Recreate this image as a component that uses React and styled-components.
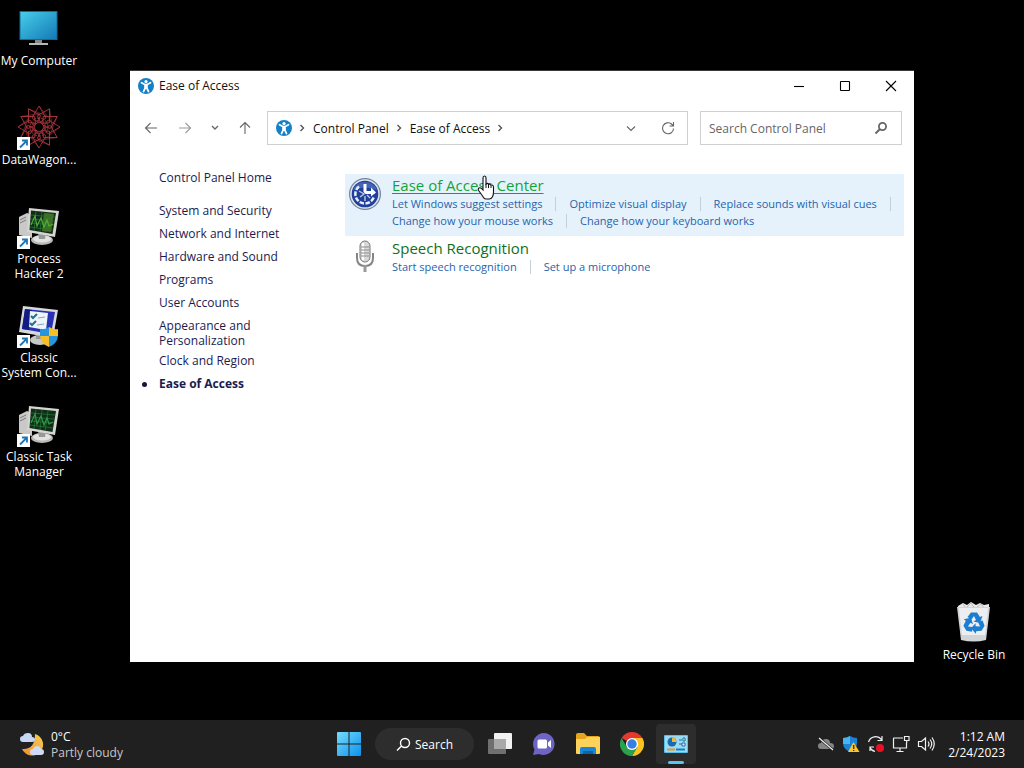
import React, { useState } from "react";
import styled, { createGlobalStyle } from "styled-components";

const GlobalStyle = createGlobalStyle`
  * {
    box-sizing: border-box;
  }
  body {
    margin: 0;
    background: #000;
    font-family: "Open Sans", "Noto Sans", sans-serif;
    font-size: 12px;
    line-height: 15px;
  }
  button, input {
    font: inherit;
    color: inherit;
    background: none;
    border: 0;
    padding: 0;
  }
  ul {
    list-style: none;
    margin: 0;
    padding: 0;
  }
  svg {
    display: block;
    flex: none;
  }
`;

const Screen = styled.div`
  min-height: 100vh;
  display: flex;
  flex-direction: column;
`;

const Desktop = styled.main`
  position: relative;
  flex: 1;
  display: flex;
  justify-content: space-between;
`;

const IconColumn = styled.div`
  display: flex;
  flex-direction: column;
  justify-content: ${(props) => (props.$bottom ? "flex-end" : "flex-start")};
  padding: ${(props) => (props.$bottom ? "0 11px 27px 0" : "0")};
`;

const Shortcut = styled.button`
  width: 78px;
  height: 99px;
  padding-top: 4px;
  display: flex;
  flex-direction: column;
  align-items: center;
  gap: 1px;
  color: #fff;
`;

const AppWindow = styled.section`
  position: absolute;
  top: 70px;
  right: 110px;
  bottom: 58px;
  left: 130px;
  display: flex;
  flex-direction: column;
  background: #fff;
  border-top: 1px solid #3a3a3a;
  color: #111;
`;

const TitleBar = styled.header`
  display: flex;
  align-items: center;
  justify-content: space-between;
  height: 29px;
  padding-left: 8px;
`;

const Title = styled.h1`
  display: flex;
  align-items: center;
  gap: 5px;
  margin: 0;
  font-size: 12px;
  font-weight: 400;
`;

const WindowButtons = styled.div`
  display: flex;
`;

const WindowButton = styled.button`
  width: 46px;
  height: 29px;
  display: grid;
  place-items: center;
`;

const Toolbar = styled.div`
  display: flex;
  align-items: center;
  padding: 11px 12px 0 4px;
`;

const NavButtons = styled.div`
  display: flex;
  width: 133px;
`;

const NavButton = styled.button`
  width: ${(props) => (props.$narrow ? "26px" : "34px")};
  height: 34px;
  display: grid;
  place-items: center;
`;

const AddressBar = styled.nav`
  flex: 1;
  height: 34px;
  display: flex;
  align-items: center;
  border: 1px solid #d0d0d0;
  padding: 0 11px 0 8px;
`;

const Crumb = styled.button`
  white-space: nowrap;
`;

const CrumbArrow = styled.svg`
  margin: 0 8px 0 7px;
`;

const AddressTools = styled.div`
  display: flex;
  gap: 21px;
  margin-left: auto;
`;

const SearchBox = styled.label`
  width: 202px;
  height: 34px;
  display: flex;
  align-items: center;
  margin-left: 12px;
  border: 1px solid #d0d0d0;
  padding: 0 13px 0 8px;
`;

const SearchInput = styled.input`
  flex: 1;
  min-width: 0;
  outline: 0;
  &::placeholder {
    color: #666;
    opacity: 1;
  }
`;

const Body = styled.div`
  flex: 1;
  display: grid;
  grid-template-columns: 215px 1fr;
  padding: 25px 10px 0 0;
`;

const Sidebar = styled.nav`
  padding-left: 29px;
`;

const SideItem = styled.li`
  position: relative;
  width: 140px;
  margin-bottom: ${(props) => props.$gap || 8}px;
  font-weight: ${(props) => (props.$current ? 700 : 400)};
`;

const SideLink = styled.a`
  color: #1b1b4f;
  text-decoration: none;
`;

const Bullet = styled.span`
  position: absolute;
  left: -17px;
  top: 6px;
  width: 5px;
  height: 5px;
  border-radius: 50%;
  background: #16163a;
`;

const Categories = styled.div`
  padding-top: 4px;
`;

const Category = styled.article`
  position: relative;
  display: flex;
  gap: 11px;
  padding: 1px 0 7px 4px;
  margin-bottom: 1px;
  background: ${(props) => (props.$hover ? "#e5f2fc" : "transparent")};
`;

const CategoryTitle = styled.h2`
  margin: 0;
  font-size: 15px;
  line-height: 20px;
  font-weight: 400;
`;

const CategoryLink = styled.a`
  color: ${(props) => (props.$hover ? "#15a238" : "#10701c")};
  text-decoration: ${(props) => (props.$hover ? "underline" : "none")};
  text-underline-offset: 2px;
`;

const TaskRow = styled.ul`
  display: flex;
`;

const Task = styled.li`
  display: flex;
  align-items: center;
  font-size: 11px;
  line-height: 17px;
  white-space: nowrap;
  &::after {
    content: "";
    display: ${(props) => (props.$last ? "none" : "block")};
    width: 1px;
    height: 14px;
    margin: 0 13px;
    background: #c3d0dc;
  }
`;

const TaskLink = styled.a`
  color: #1f64ad;
  text-decoration: none;
`;

const Cursor = styled.svg`
  position: absolute;
  left: 132px;
  top: 1px;
`;

const Taskbar = styled.footer`
  height: 48px;
  display: grid;
  grid-template-columns: 1fr auto 1fr;
  align-items: center;
  background: #202020;
  color: #fff;
`;

const Weather = styled.button`
  display: flex;
  align-items: center;
  gap: 6px;
  padding: 2px 0 0 19px;
  text-align: left;
  line-height: 16px;
`;

const Muted = styled.div`
  color: #c8c8c8;
`;

const Apps = styled.div`
  display: flex;
  align-items: center;
`;

const AppButton = styled.button`
  position: relative;
  width: 44px;
  height: 48px;
  display: grid;
  place-items: center;
`;

const ActiveApp = styled(AppButton)`
  width: 40px;
  height: 40px;
  margin: 0 2px;
  border-radius: 4px;
  background: #2d2d2d;
  &::after {
    content: "";
    position: absolute;
    left: 12px;
    bottom: 0;
    width: 16px;
    height: 3px;
    border-radius: 2px;
    background: #5cc3ee;
  }
`;

const SearchPill = styled.button`
  width: 99px;
  height: 32px;
  margin: 0 4px;
  display: flex;
  align-items: center;
  justify-content: center;
  gap: 4px;
  border-radius: 16px;
  background: #2d2d2d;
`;

const Tray = styled.div`
  display: flex;
  align-items: center;
  justify-content: flex-end;
  padding-right: 19px;
`;

const TrayButton = styled.button`
  width: 25px;
  height: 40px;
  display: grid;
  place-items: center;
`;

const Clock = styled.time`
  width: 67px;
  display: flex;
  flex-direction: column;
  align-items: flex-end;
  padding-top: 1px;
  line-height: 16px;
`;

const ShortcutArrow = () => (
  <g>
    <rect x="2" y="34" width="13" height="13" fill="#fff" />
    <path
      d="M5 44.5 L11.5 38 M7 37.5 H12 V42.5"
      fill="none"
      stroke="#1976b8"
      strokeWidth="1.8"
    />
  </g>
);

const ComputerIcon = () => (
  <svg width="48" height="48" viewBox="0 0 48 48">
    <defs>
      <linearGradient id="screen" x1="0" y1="0" x2="1" y2="1">
        <stop offset="0" stopColor="#46cdea" />
        <stop offset="1" stopColor="#147ab5" />
      </linearGradient>
    </defs>
    <rect x="4.5" y="7" width="38" height="29" fill="#16689a" />
    <rect x="5.5" y="8" width="36" height="27" fill="url(#screen)" />
    <path d="M20 36h7v3.500h-7z" fill="#85898c" />
    <path d="M14 39h19v2H14z" fill="#b4b8ba" />
  </svg>
);

const petals = Array.from({ length: 12 }, (_, i) => i * 30);

const WagonIcon = () => (
  <svg width="48" height="48" viewBox="0 0 48 48">
    <g fill="none" stroke="#b23a41" strokeWidth="0.8">
      {petals.map((angle) => (
        <g key={angle} transform={`rotate(${angle} 24 24)`}>
          <path d="M24 3 L31 15 L24 20 L17 15 Z" />
          <path d="M24 3 L36 18" opacity="0.6" />
        </g>
      ))}
      <circle cx="24" cy="24" r="9" strokeDasharray="3 1" />
      <circle cx="24" cy="24" r="6" stroke="#7c252c" strokeWidth="2.5" strokeDasharray="3 2" />
    </g>
    <ShortcutArrow />
  </svg>
);

const MonitorBase = ({ children }) => (
  <svg width="48" height="48" viewBox="0 0 48 48">
    {children}
    <ShortcutArrow />
  </svg>
);

const GraphIcon = ({ bright }) => (
  <MonitorBase>
    <path d="M4 15 L12 11 L17 13 V36 L4 33Z" fill="#c9c9c7" />
    <path d="M5 18l6-3M5 21l6-3" stroke="#777" strokeWidth="1" />
    <ellipse cx="27" cy="38" rx="11" ry="5" fill="#b9bab8" />
    <ellipse cx="27" cy="37" rx="9" ry="3.5" fill="#e2e2e0" />
    <path d="M23 31h8l-1 6h-6z" fill="#96999a" />
    <path d="M14 6 L44 9 L40 35 L12 30Z" fill="#d5d5d2" />
    <path d="M16 8.500 L41 11 L37.500 32 L14.500 28Z" fill="#102d18" />
    {bright && <path d="M29 11 L39 12 L36 30 L27 29Z" fill="#6b9a24" opacity="0.6" />}
    <path
      d="M16 13l24 2M16 17l23 2M15 21l24 2M15 25l23 3M21 9l-2 20M27 10l-2 20M33 11l-3 20"
      stroke="#237438"
      strokeWidth="0.8"
    />
    <path
      d="M16 23l4-9 2 10 4-8 3 9 3-7 2 6 4-2"
      fill="none"
      stroke={bright ? "#4fae35" : "#2f9a43"}
      strokeWidth="1.2"
    />
  </MonitorBase>
);

const ConfigIcon = () => (
  <MonitorBase>
    <ellipse cx="25" cy="39" rx="10" ry="5" fill="#c6c7c6" />
    <path d="M21 31h9v7h-9z" fill="#96999a" />
    <path d="M8 5 L43 9 L38 37 L4 31Z" fill="#d7d8da" />
    <path d="M10 8 L40 11 L36 33 L7 28Z" fill="#2831b4" />
    <path d="M10 8 L17 9 L14 29 L7 28Z" fill="#101c83" />
    <path d="M15 10 L33 12 L31 29 L14 26Z" fill="#eef5fa" />
    <path d="M16 15l2 2 4-4M15 22l2 2 4-4" fill="none" stroke="#27708a" strokeWidth="2" />
    <path d="M23 17l7-1M22 24l7-1" stroke="#8fa5b8" strokeWidth="1.2" />
    <path d="M34 26q-5 3-9 2v7h9z" fill="#2695dd" />
    <path d="M34 26q5 3 9 2v7h-9z" fill="#f6bf26" />
    <path d="M25 35h9v11q-8-3-9-11z" fill="#f6bf26" />
    <path d="M34 35h9q-1 8-9 11z" fill="#2695dd" />
  </MonitorBase>
);

const RecycleIcon = () => (
  <svg width="48" height="48" viewBox="0 0 48 48">
    <path d="M8 8l5-3 4 2 4-3 5 3 4-2 4 2 5-1v6H8z" fill="#e9eaeb" />
    <path d="M13 6l3 4 5-5 4 6 6-5 4 5" fill="none" stroke="#b4b7ba" />
    <path d="M7 9h33l-4 33q-12 3-25 0z" fill="#d2d5d8" />
    <path d="M9 10h29l-3 27H12z" fill="#eceeef" />
    {[0, 120, 240].map((angle) => (
      <g key={angle} transform={`rotate(${angle} 24 25)`}>
        <path d="M17.500 19l3.500-4.500h6l3 4.500 2.500-1-2.500 7-6.500-1.500 2.500-1.500-2-4-2.500 3.500z" fill="#1c7ed2" />
      </g>
    ))}
  </svg>
);

const AccessIcon = () => (
  <svg width="16" height="16" viewBox="0 0 16 16">
    <circle cx="8" cy="8" r="8" fill="#1480c8" />
    <circle cx="8" cy="3.6" r="1.6" fill="#fff" />
    <path
      d="M3.500 4.700L6.700 6.500h2.600l3.200-1.800M8 6.500v3.500M7 7v3.500L5.500 13.500M9 7v3.500l1.500 3"
      fill="none"
      stroke="#fff"
      strokeWidth="1.7"
      strokeLinecap="round"
    />
  </svg>
);

const EaseCenterIcon = () => (
  <svg width="32" height="36" viewBox="0 0 32 36">
    <circle cx="16" cy="19" r="16" fill="#71839d" />
    <circle cx="16" cy="19" r="14.8" fill="#dfe5ee" />
    <circle cx="16" cy="19" r="13.3" fill="#1f3f9a" />
    <path d="M4 15a13 13 0 0 1 24 0q-12-5-24 0z" fill="#4565b4" />
    <path
      d="M10 11.500a9.500 9.500 0 1 0 15 10"
      fill="none"
      stroke="#e8eefa"
      strokeWidth="2.5"
      strokeDasharray="4.500 1.500"
    />
    <path d="M14.500 9h3v7h8v3h-9l-2-2z" fill="#fff" />
    <path d="M22 12.500l5 5-5 4z" fill="#fff" />
    <path d="M10 16l5 3-4 3M16 21v5M18 20l3 3" fill="none" stroke="#b8c9ea" strokeWidth="1.4" />
  </svg>
);

const MicrophoneIcon = () => (
  <svg width="32" height="36" viewBox="0 0 32 36">
    <path d="M8 15v5q0 8 8 8t8-8v-5" fill="none" stroke="#858585" strokeWidth="2" />
    <path d="M14.500 27h3v7h-3z" fill="#999" />
    <rect x="11" y="3" width="10" height="21" rx="5" fill="#d8d8d8" stroke="#777" />
    <path d="M14 5v17" stroke="#fff" strokeWidth="2" />
    <path d="M12 9h8M12 12h8M12 15h8M12 18h8" stroke="#8b8b8b" strokeWidth="1" />
  </svg>
);

const Line = ({ d, width = 16, height = 16, color = "#666", weight = 1.1 }) => (
  <svg
    width={width}
    height={height}
    viewBox={`0 0 ${width} ${height}`}
    fill="none"
    stroke={color}
    strokeWidth={weight}
  >
    <path d={d} />
  </svg>
);

const Chevron = () => (
  <CrumbArrow width="6" height="8" viewBox="0 0 6 8" fill="none" stroke="#555">
    <path d="M1.500 1l3 3-3 3" strokeWidth="1.4" />
  </CrumbArrow>
);

const MagnifierIcon = () => (
  <svg width="14" height="14" viewBox="0 0 14 14" fill="none" stroke="#666">
    <circle cx="8.5" cy="5.5" r="3.6" strokeWidth="1.8" />
    <path d="M6 8L1.500 12.500" strokeWidth="2" />
  </svg>
);

const HandCursor = () => (
  <Cursor width="18" height="25" viewBox="0 0 18 25" aria-hidden="true">
    <path
      d="M6 14V3q0-2 1.500-2T9 3v6q1.500-1.500 2.500.5 1.500-1 2.500.7 2.500-.7 2.500 2V17q0 6-4 7H9q-2 0-3.500-3L2 16q-1.500-2 0-3t4 2z"
      fill="#fff"
      stroke="#111"
      strokeWidth="1.1"
    />
    <path d="M9 9v4M11.500 10v3M14 10.500V13" stroke="#111" />
  </Cursor>
);

const WeatherIcon = () => (
  <svg width="26" height="26" viewBox="0 0 26 26">
    <defs>
      <linearGradient id="moon" x1="1" y1="0" x2="0" y2="1">
        <stop offset="0" stopColor="#f6cf52" />
        <stop offset="1" stopColor="#ee8e2c" />
      </linearGradient>
    </defs>
    <path d="M16 2a11 11 0 1 1-13 15q13 1 13-15z" fill="url(#moon)" />
    <path d="M4 10a3 3 0 0 1 0-6q1-3 5-3t4 4q3 0 3 2.500T13 10z" fill="#c7d8f7" />
    <path d="M14 23a3 3 0 0 1 0-6q1-3 4-3t4 3q3 0 3 3t-3 3z" fill="#d0d9f5" />
  </svg>
);

const StartIcon = () => (
  <svg width="24" height="24" viewBox="0 0 24 24">
    <defs>
      <linearGradient id="start" x1="0" y1="0" x2="1" y2="1">
        <stop offset="0" stopColor="#75ddfa" />
        <stop offset="1" stopColor="#0b91ee" />
      </linearGradient>
    </defs>
    <path
      d="M1 0h10.500v11.500H0V1q0-1 1-1zM12.500 0H23q1 0 1 1v10.500H12.500zM0 12.500h11.500V24H1q-1 0-1-1zM12.500 12.500H24V23q0 1-1 1H12.500z"
      fill="url(#start)"
    />
  </svg>
);

const TaskViewIcon = () => (
  <svg width="24" height="24" viewBox="0 0 24 24">
    <rect x="6" y="1" width="18" height="16" rx="1" fill="#f1f1f1" />
    <rect x="0" y="7" width="18" height="15" rx="1" fill="#6f6f6f" />
    <path d="M6 7h12v10H6z" fill="#a9a9a9" />
  </svg>
);

const ChatIcon = () => (
  <svg width="24" height="24" viewBox="0 0 24 24">
    <path d="M12 1a11 11 0 1 1-5 21l-6 1 1.500-5.500A11 11 0 0 1 12 1z" fill="#6e64c4" />
    <rect x="5.5" y="7.5" width="9.5" height="9" rx="1.5" fill="#fff" />
    <path d="M16 10.500l3-2.500v8l-3-2.500z" fill="#fff" />
  </svg>
);

const FolderIcon = () => (
  <svg width="24" height="24" viewBox="0 0 24 24">
    <path d="M0 3q0-2 2-2h6l3 3h11q2 0 2 2v6H0z" fill="#e6a51d" />
    <path d="M0 7h9l2-2h13v16q0 1-1 1H1q-1 0-1-1z" fill="#fdd25b" />
    <path d="M4 22v-5q0-2 2-2h12q2 0 2 2v5z" fill="#1687d2" />
    <path d="M7 19h10v3H7z" fill="#0b65aa" />
  </svg>
);

const ChromeIcon = () => (
  <svg width="24" height="24" viewBox="0 0 24 24">
    <path d="M12 12L1.600 6a12 12 0 0 1 20.800 0z" fill="#e5392d" />
    <path d="M12 6h10.400A12 12 0 0 1 12 24l5.200-9z" fill="#fbc321" />
    <path d="M1.600 6L6.800 15l10.400 0L12 24A12 12 0 0 1 1.600 6z" fill="#2aa14c" />
    <circle cx="12" cy="12" r="6" fill="#fff" />
    <circle cx="12" cy="12" r="4.7" fill="#367fe5" />
  </svg>
);

const ControlPanelIcon = () => (
  <svg width="24" height="18" viewBox="0 0 24 18">
    <rect width="24" height="18" rx="1" fill="#5dbde9" />
    <rect x="1" y="1" width="22" height="16" fill="#9bdcf5" />
    <circle cx="8" cy="7" r="4.5" fill="#176caf" />
    <path d="M8 7V2.500A4.500 4.500 0 0 1 12.500 7z" fill="#f2b83c" />
    <path d="M15 5h3M15 9h3M19 3h2v3h-2zM18 8h3v3h-3z" stroke="#246c9f" fill="#e8f7fd" />
    <path d="M3 14.500h8" stroke="#e7962f" strokeWidth="2" />
    <path d="M12 14.500h9" stroke="#177fbe" strokeWidth="2" />
  </svg>
);

const CloudOffIcon = () => (
  <svg width="18" height="18" viewBox="0 0 18 18">
    <path d="M4 14a3 3 0 0 1 0-6q1-4 5-4t4 4q4 0 4 3t-3 3z" fill="#858585" />
    <path d="M2 3l14 12" stroke="#202020" strokeWidth="2.4" />
    <path d="M2 3l14 12" stroke="#f1f1f1" strokeWidth="1.2" />
  </svg>
);

const ShieldIcon = () => (
  <svg width="18" height="18" viewBox="0 0 18 18">
    <path d="M8 1q3 2 7 2v5q0 6-7 9-7-3-7-9V3q4 0 7-2z" fill="#1c82d6" />
    <path d="M8 1v8H1V3q4 0 7-2z" fill="#48b4ee" />
    <path d="M11.500 7L17.500 17H6z" fill="#fbc42b" />
    <path d="M11.700 10v4M11.700 15v1" stroke="#332a12" strokeWidth="1.3" />
  </svg>
);

const UpdateIcon = () => (
  <svg width="18" height="18" viewBox="0 0 18 18" fill="none" stroke="#f1f1f1" strokeWidth="1.2">
    <path d="M1.500 7a7.500 7.500 0 0 1 13-2.500M15 1v4.500h-4.500M3 16v-4h4M3 12.500q1 3 5 4" />
    <circle cx="13" cy="13" r="4" fill="#e81224" stroke="none" />
  </svg>
);

const NetworkIcon = () => (
  <svg width="18" height="18" viewBox="0 0 18 18" fill="none" stroke="#f1f1f1" strokeWidth="1.2">
    <path d="M11 3H2q-.5 0-.5.500v9.500h13V8M8 13v3M4.500 16.500h7M12.500 1.500H17v4h-4.500zM14.700 5.500V8" />
  </svg>
);

const VolumeIcon = () => (
  <svg width="18" height="18" viewBox="0 0 18 18" fill="none" stroke="#f1f1f1" strokeWidth="1.2">
    <path d="M1.500 6.500h3l4-3.500v12l-4-3.500h-3zM11 6.500q2 2.500 0 5M13 4.500q3.500 4.500 0 9M15 2.500q4.500 6.500 0 13" />
  </svg>
);

const shortcuts = [
  { label: "My Computer", icon: <ComputerIcon /> },
  { label: "DataWagon...", icon: <WagonIcon /> },
  { label: "Process Hacker 2", icon: <GraphIcon bright /> },
  { label: "Classic System Con...", icon: <ConfigIcon /> },
  { label: "Classic Task Manager", icon: <GraphIcon /> },
];

const sideItems = [
  { label: "Control Panel Home", gap: 18 },
  { label: "System and Security" },
  { label: "Network and Internet" },
  { label: "Hardware and Sound" },
  { label: "Programs" },
  { label: "User Accounts" },
  { label: "Appearance and Personalization", gap: 5 },
  { label: "Clock and Region" },
  { label: "Ease of Access", current: true },
];

const categories = [
  {
    title: "Ease of Access Center",
    icon: <EaseCenterIcon />,
    hover: true,
    rows: [
      [
        "Let Windows suggest settings",
        "Optimize visual display",
        "Replace sounds with visual cues",
      ],
      ["Change how your mouse works", "Change how your keyboard works"],
    ],
  },
  {
    title: "Speech Recognition",
    icon: <MicrophoneIcon />,
    rows: [["Start speech recognition", "Set up a microphone"]],
  },
];

const ControlPanel = () => {
  const [query, setQuery] = useState("");

  return (
    <AppWindow>
      <TitleBar>
        <Title>
          <AccessIcon />
          Ease of Access
        </Title>
        <WindowButtons>
          <WindowButton aria-label="Minimize">
            <Line d="M3 8.500h10" color="#000" />
          </WindowButton>
          <WindowButton aria-label="Maximize">
            <Line d="M4 3.500h8q.5 0 .5.500v8q0 .5-.5.500H4q-.5 0-.5-.5V4q0-.5.5-.5z" color="#000" />
          </WindowButton>
          <WindowButton aria-label="Close">
            <Line d="M3 3l10 10M13 3L3 13" color="#000" />
          </WindowButton>
        </WindowButtons>
      </TitleBar>

      <Toolbar>
        <NavButtons>
          <NavButton aria-label="Back">
            <Line d="M14 8H2.500M7.500 3l-5 5 5 5" />
          </NavButton>
          <NavButton aria-label="Forward">
            <Line d="M2 8h11.500M8.500 3l5 5-5 5" color="#999" />
          </NavButton>
          <NavButton $narrow aria-label="Recent locations">
            <Line d="M1 2l3 3 3-3" width={8} height={8} weight={1.4} />
          </NavButton>
          <NavButton aria-label="Up">
            <Line d="M8 14V2.500M3 7.500l5-5 5 5" />
          </NavButton>
        </NavButtons>
        <AddressBar aria-label="Address">
          <AccessIcon />
          <Chevron />
          <Crumb>Control Panel</Crumb>
          <Chevron />
          <Crumb>Ease of Access</Crumb>
          <Chevron />
          <AddressTools>
            <button aria-label="Previous locations">
              <Line d="M4 6.500l4 4 4-4" />
            </button>
            <button aria-label="Refresh">
              <Line d="M13.500 8.500a5.500 5.500 0 1 1-2-4.500l1.500 1.500M13.500 2v4h-4" />
            </button>
          </AddressTools>
        </AddressBar>
        <SearchBox>
          <SearchInput
            type="text"
            aria-label="Search Control Panel"
            placeholder="Search Control Panel"
            value={query}
            onChange={(e) => setQuery(e.target.value)}
          />
          <MagnifierIcon />
        </SearchBox>
      </Toolbar>

      <Body>
        <Sidebar>
          <ul>
            {sideItems.map((item) => (
              <SideItem key={item.label} $gap={item.gap} $current={item.current}>
                {item.current && <Bullet />}
                <SideLink href="#">{item.label}</SideLink>
              </SideItem>
            ))}
          </ul>
        </Sidebar>
        <Categories>
          {categories.map((category) => (
            <Category key={category.title} $hover={category.hover}>
              {category.icon}
              <div>
                <CategoryTitle>
                  <CategoryLink href="#" $hover={category.hover}>
                    {category.title}
                  </CategoryLink>
                </CategoryTitle>
                {category.rows.map((row, r) => (
                  <TaskRow key={r}>
                    {row.map((task, i) => (
                      <Task
                        key={task}
                        $last={r === category.rows.length - 1 && i === row.length - 1}
                      >
                        <TaskLink href="#">{task}</TaskLink>
                      </Task>
                    ))}
                  </TaskRow>
                ))}
              </div>
              {category.hover && <HandCursor />}
            </Category>
          ))}
        </Categories>
      </Body>
    </AppWindow>
  );
};

const App = () => {
  return (
    <Screen>
      <GlobalStyle />
      <Desktop>
        <IconColumn>
          {shortcuts.map((item) => (
            <Shortcut key={item.label}>
              {item.icon}
              {item.label}
            </Shortcut>
          ))}
        </IconColumn>
        <ControlPanel />
        <IconColumn $bottom>
          <Shortcut>
            <RecycleIcon />
            Recycle Bin
          </Shortcut>
        </IconColumn>
      </Desktop>

      <Taskbar>
        <Weather>
          <WeatherIcon />
          <div>
            <div>0°C</div>
            <Muted>Partly cloudy</Muted>
          </div>
        </Weather>
        <Apps>
          <AppButton aria-label="Start">
            <StartIcon />
          </AppButton>
          <SearchPill>
            <Line
              d="M6.500 10L2 14.500M5.500 7a4.500 4.500 0 1 0 9 0a4.500 4.500 0 1 0-9 0"
              color="#fff"
              weight={1.4}
            />
            Search
          </SearchPill>
          <AppButton aria-label="Task view">
            <TaskViewIcon />
          </AppButton>
          <AppButton aria-label="Chat">
            <ChatIcon />
          </AppButton>
          <AppButton aria-label="File Explorer">
            <FolderIcon />
          </AppButton>
          <AppButton aria-label="Chrome">
            <ChromeIcon />
          </AppButton>
          <ActiveApp aria-label="Control Panel">
            <ControlPanelIcon />
          </ActiveApp>
        </Apps>
        <Tray>
          <TrayButton aria-label="OneDrive">
            <CloudOffIcon />
          </TrayButton>
          <TrayButton aria-label="Security">
            <ShieldIcon />
          </TrayButton>
          <TrayButton aria-label="Update">
            <UpdateIcon />
          </TrayButton>
          <TrayButton aria-label="Network">
            <NetworkIcon />
          </TrayButton>
          <TrayButton aria-label="Volume">
            <VolumeIcon />
          </TrayButton>
          <Clock>
            <span>1:12 AM</span>
            <span>2/24/2023</span>
          </Clock>
        </Tray>
      </Taskbar>
    </Screen>
  );
};

export default App;
